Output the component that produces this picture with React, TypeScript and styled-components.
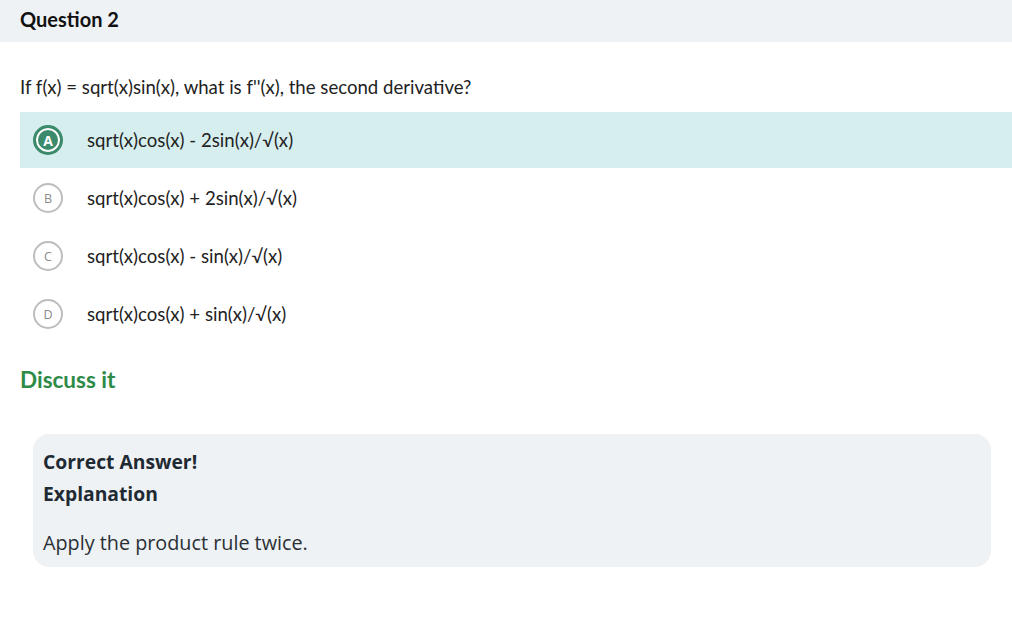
import React from "react";
import styled, { createGlobalStyle } from "styled-components";

const Global = createGlobalStyle`
  html, body { margin: 0; padding: 0; background: #ffffff; }
  body { font-family: Lato, "Noto Sans", sans-serif; color: #1f1f1f; }
`;

const Page = styled.div`
  display: flex;
  flex-direction: column;
  width: 1012px;
`;

const Header = styled.div`
  height: 42px;
  background: #eef2f5;
  display: flex;
  align-items: center;
  padding: 0 20px 4px;
  box-sizing: border-box;
  font-family: Lato, sans-serif;
  font-weight: 700;
  font-size: 20px;
  color: #111;
`;

const QuestionText = styled.div`
  margin: 33px 0 0 20px;
  height: 24px;
  line-height: 24px;
  font-family: Lato, sans-serif;
  font-size: 18.6px;
  color: #222;
`;

const Options = styled.div`
  margin: 13px 0 0 20px;
  display: flex;
  flex-direction: column;
  gap: 2px;
`;

const Row = styled.div<{ $selected?: boolean }>`
  height: 56px;
  display: flex;
  align-items: center;
  background: ${(p) => (p.$selected ? "#d6eeee" : "transparent")};
`;

const Badge = styled.div<{ $selected?: boolean }>`
  width: 30px;
  height: 30px;
  margin-left: 13px;
  border-radius: 50%;
  box-sizing: border-box;
  display: flex;
  align-items: center;
  justify-content: center;
  font-family: "Open Sans", sans-serif;
  font-size: ${(p) => (p.$selected ? "14px" : "12.5px")};
  font-weight: ${(p) => (p.$selected ? 700 : 500)};
  border: ${(p) => (p.$selected ? "3px solid #3b8a6b" : "2px solid #bdbdbd")};
  color: ${(p) => (p.$selected ? "#ffffff" : "#8a8a8a")};
  background: #fff;
  box-shadow: ${(p) => (p.$selected ? "inset 0 0 0 2px #fff, inset 0 0 0 20px #3b8a6b" : "none")};
`;

const OptionText = styled.span`
  margin-left: 24px;
  font-family: Lato, sans-serif;
  font-size: 18.6px;
  color: #222;
`;

const Discuss = styled.div`
  margin: 24px 0 0 20px;
  font-family: Lato, sans-serif;
  font-weight: 700;
  font-size: 22.5px;
  color: #2e8b47;
  line-height: 28px;
`;

const Explain = styled.div`
  margin: 40px 21px 0 33px;
  height: 133px;
  box-sizing: border-box;
  background: #eef2f5;
  border-radius: 16px;
  padding: 16px 10px;
  display: flex;
  flex-direction: column;
`;

const Strong = styled.div`
  font-family: "Open Sans", sans-serif;
  font-weight: 700;
  font-size: 19.3px;
  line-height: 24px;
  color: #1f2a33;
  margin-bottom: 8px;
`;

const Body = styled.div`
  margin-top: 17px;
  font-family: "Open Sans", sans-serif;
  font-size: 19.8px;
  line-height: 24px;
  color: #2a2f33;
`;

const options = [
  { letter: "A", text: "sqrt(x)cos(x) - 2sin(x)/√(x)", selected: true },
  { letter: "B", text: "sqrt(x)cos(x) + 2sin(x)/√(x)" },
  { letter: "C", text: "sqrt(x)cos(x) - sin(x)/√(x)" },
  { letter: "D", text: "sqrt(x)cos(x) + sin(x)/√(x)" },
];

export default function App() {
  return (
    <Page>
      <Global />
      <Header>Question 2</Header>
      <QuestionText>If f(x) = sqrt(x)sin(x), what is f''(x), the second derivative?</QuestionText>
      <Options>
        {options.map((o) => (
          <Row key={o.letter} $selected={o.selected}>
            <Badge $selected={o.selected}>{o.letter}</Badge>
            <OptionText>{o.text}</OptionText>
          </Row>
        ))}
      </Options>
      <Discuss>Discuss it</Discuss>
      <Explain>
        <Strong>Correct Answer!</Strong>
        <Strong>Explanation</Strong>
        <Body>Apply the product rule twice.</Body>
      </Explain>
    </Page>
  );
}
